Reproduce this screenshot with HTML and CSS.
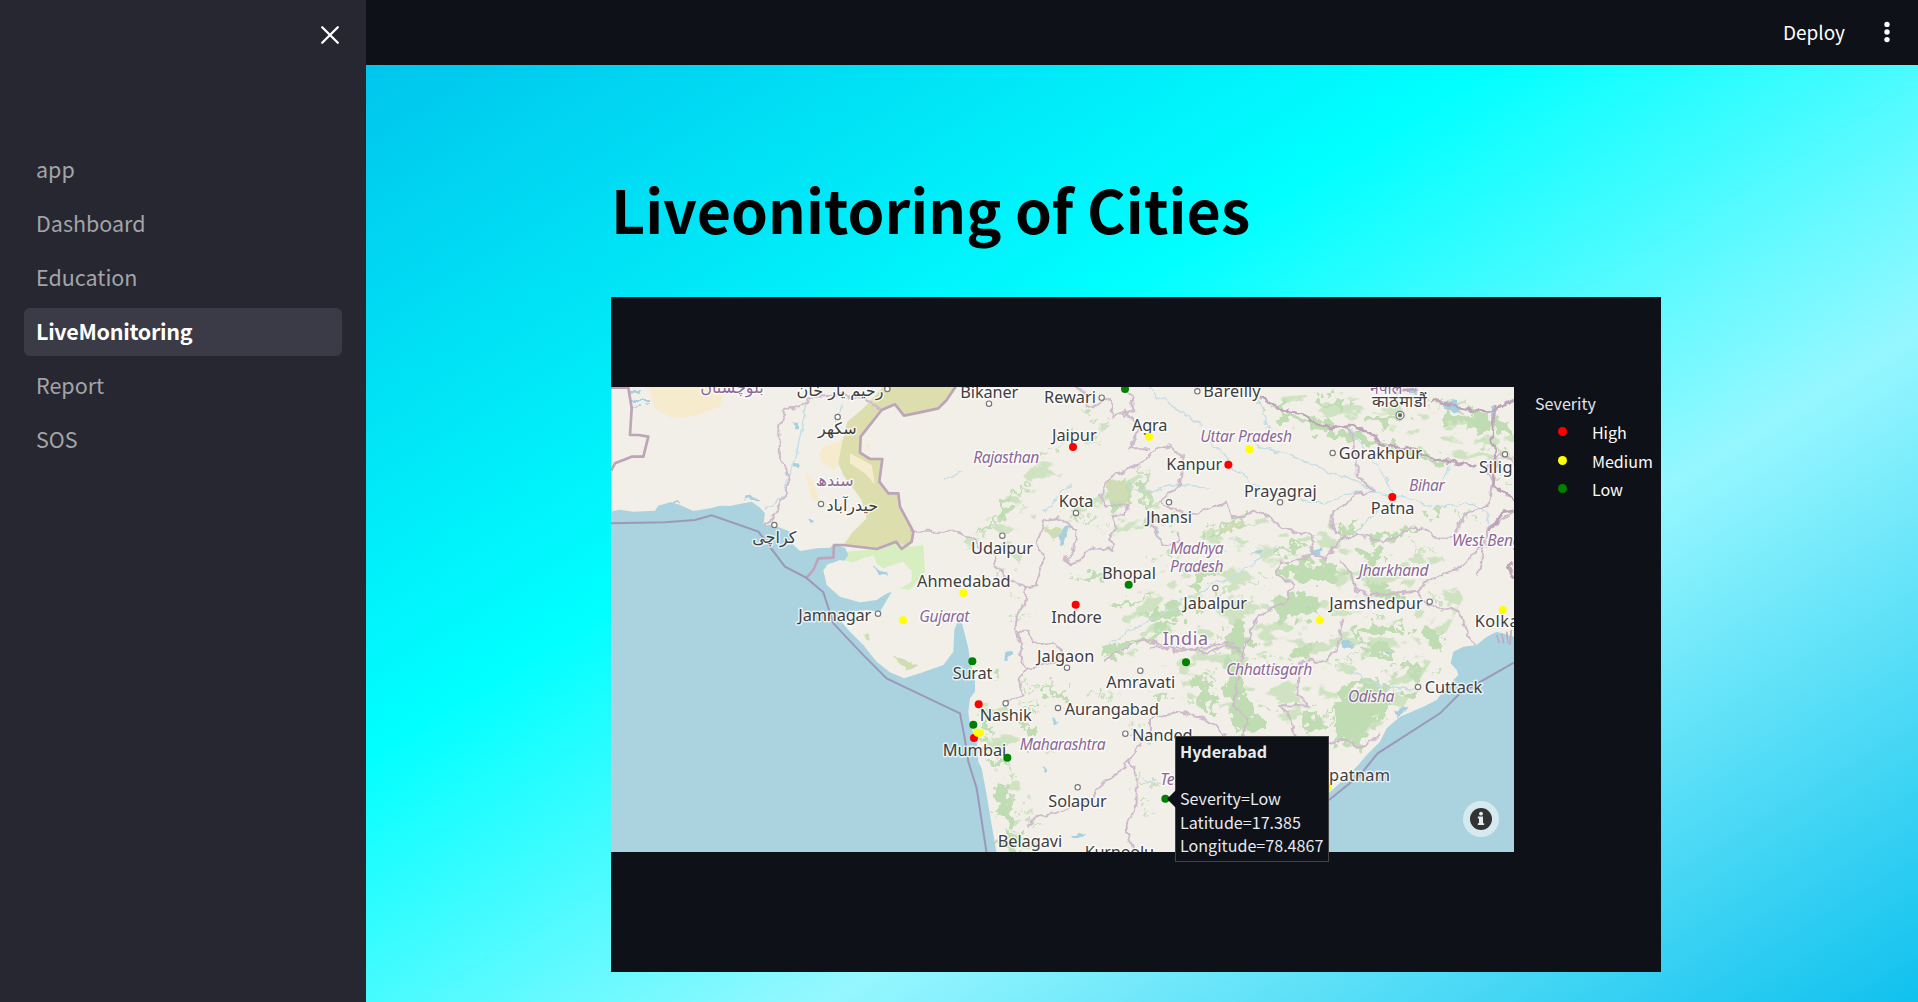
FILE: index.html
```html
<!DOCTYPE html>
<html lang="en">
<head>
<meta charset="utf-8">
<title>LiveMonitoring</title>
<link rel="stylesheet" href="styles.css">
</head>
<body>
<div class="app">
  <aside class="sidebar">
    <button class="close" aria-label="Close sidebar">
      <svg width="20" height="20" viewBox="0 0 20 20"><path d="M2.2 2.2 17.8 17.8M17.8 2.2 2.2 17.8"/></svg>
    </button>
    <nav class="nav">
      <a class="nav-item">app</a>
      <a class="nav-item">Dashboard</a>
      <a class="nav-item">Education</a>
      <a class="nav-item active">LiveMonitoring</a>
      <a class="nav-item">Report</a>
      <a class="nav-item">SOS</a>
    </nav>
  </aside>
  <main class="main">
    <header class="toolbar">
      <span class="deploy">Deploy</span>
      <svg class="kebab" width="6" height="22" viewBox="0 0 6 22"><circle cx="3" cy="3.4" r="2.7"/><circle cx="3" cy="11" r="2.7"/><circle cx="3" cy="18.6" r="2.7"/></svg>
    </header>
    <section class="content">
      <h1 class="title">Liveonitoring of Cities</h1>
      <div class="chart">
        <div class="map">
<svg class="map-svg" width="903" height="465" viewBox="3 6 2709 1395">
  <defs>
    <filter id="rough" x="-5%" y="-5%" width="110%" height="110%"><feTurbulence type="fractalNoise" baseFrequency="0.03" numOctaves="3" seed="4"/><feDisplacementMap in="SourceGraphic" scale="95" xChannelSelector="R" yChannelSelector="G"/></filter>
    <filter id="wiggle" x="-5%" y="-5%" width="110%" height="110%"><feTurbulence type="fractalNoise" baseFrequency="0.035" numOctaves="2" seed="9"/><feDisplacementMap in="SourceGraphic" scale="26" xChannelSelector="R" yChannelSelector="G"/></filter>
    <filter id="scrub" x="0" y="0" width="100%" height="100%"><feTurbulence type="fractalNoise" baseFrequency="0.012 0.02" numOctaves="4" seed="21"/><feColorMatrix values="0 0 0 0 0  0 0 0 0 0  0 0 0 0 0  14 0 0 0 -7.9"/><feComposite in="SourceGraphic" operator="in"/></filter>
  </defs>
  <rect class="land" x="0" y="0" width="2715" height="1405"/>

  <!-- deserts and border zone -->
  <path class="sand" d="M115 6H345L330 65 255 92 185 100 135 70ZM640 185 700 165 690 240 670 255 635 230 628 205ZM585 262 610 285 628 350 605 345Z"/>
  <path class="zone" d="M825 0 H1040 L1010 45 985 70 930 82 882 92 855 58 815 75 752 155 750 203 780 222 817 222 808 290 835 325 865 325 870 365 910 440 905 470 875 492 858 470 800 492 700 480 725 445 770 400 755 345 700 270 685 235 695 180 712 110 760 70Z"/>
  <path class="sand" d="M720 205 785 240 795 300 765 265 720 235ZM770 175 785 178 770 200Z"/>
  <path class="grass" d="M700 500 810 492 855 472 905 485 940 480 945 560 900 615 860 610 905 560 880 530 820 550 770 515 710 540Z"/>

  <!-- scattered vegetation -->
  <path class="scrub" filter="url(#scrub)" d="M1560 640 1800 430 1960 400 2080 450 2200 420 2330 490 2480 480 2560 640 2480 800 2360 1000 2200 1100 2000 1080 1850 960 1760 1000 1700 860 1500 790ZM1960 40 2200 20 2500 60 2712 60V240L2560 225 2350 170 2150 120ZM1100 960 1180 940 1230 1060 1290 1400 1220 1400 1150 1150ZM1060 470 1400 100 1500 120 1300 330 1220 560 1120 560ZM1340 400 1620 250 1660 400 1500 480Z"/>

  <!-- forest cover -->
  <g class="forest" filter="url(#rough)">
    <path d="M1500 300 1550 275 1560 340 1520 365 1490 345ZM1590 290l20-30 10 90 20 70-20-10ZM1310 440l60 5 10 15-50 5ZM1230 300l12-5-60 100-30 20-60 40-5-8 60-40Z"/>
    <path d="M1740 570 1800 545 1830 560 1780 600 1735 610ZM1620 675 1700 660 1770 675 1680 705 1615 705ZM1500 660 1600 635 1610 645 1530 670ZM1500 780 1600 750 1640 720 1690 715 1640 765 1580 775 1470 830ZM1800 440 1900 400 1920 405 1850 440 1800 455Z"/>
    <path d="M1960 50 2060 90 2160 120 2280 160 2420 200 2560 235 2490 240 2380 200 2240 175 2140 140 2020 100ZM2260 90 2400 95 2360 120 2250 115ZM2500 80 2590 85 2700 110 2700 150 2600 130 2500 120ZM2120 30 2220 55 2210 70 2110 45Z"/>
    <path d="M2170 405 2240 425 2220 450 2175 440ZM2280 460 2410 430 2440 435 2370 460 2300 475ZM2460 390 2490 375 2495 395ZM1980 540 2160 530 2230 570 2150 590 2020 575ZM1970 640 2090 620 2140 690 2020 695ZM2250 490 2330 500 2310 530 2240 520ZM2270 590 2360 600 2400 660 2320 650ZM1990 500 2080 465 2100 470 2020 505Z"/>
    <path d="M1830 740 1900 720 1930 750 1890 810 1850 800ZM1850 830 1900 840 1900 930 1970 1030 1900 1060 1850 970ZM1750 870 1800 880 1820 980 1770 960ZM2050 790 2120 780 2100 810 2050 812ZM2200 740 2340 710 2360 740 2260 760ZM2240 780 2330 775 2350 820 2260 800ZM2450 735 2500 725 2490 795 2450 785ZM2210 900 2330 880 2340 960 2300 1000 2250 1090 2190 1070 2180 980 2160 1010 2180 940ZM2390 830 2450 850 2420 880 2370 860ZM2360 920 2420 920 2390 960ZM2100 970 2140 1000 2130 1050 2080 1040ZM2320 720 2400 710 2390 735Z"/>
    <path d="M1110 980 1140 1000 1150 1060 1125 1060ZM1120 1095 1180 1130 1200 1160 1150 1150ZM1150 1180 1190 1190 1210 1260 1220 1330 1190 1330 1160 1250ZM1170 1340 1220 1350 1240 1400 1180 1400ZM1150 850 1180 855 1170 870ZM1280 925 1380 915 1360 930 1290 935ZM1620 930 1680 925 1660 945ZM1230 965 1300 975 1280 985ZM1230 1020 1270 1025 1260 1045ZM1400 580 1500 560 1500 570 1420 590Z"/>
  </g>
  <g class="specks" filter="url(#rough)">
    <path d="M1080 490 1160 410 1240 320 1310 200 1400 140M1420 80 1500 100 1440 180M1370 380 1480 430M1150 560 1220 640M1200 690 1260 700M1530 300 1540 380M1600 250 1620 400M1640 420 1720 390M1620 520 1700 500M1900 600 1980 580M1830 620 1930 650M2200 560 2300 580M2400 480 2470 500M2260 640 2300 700M2450 610 2500 660M1780 790 1850 800M1810 850 1790 930M1940 800 2020 860M2040 830 2160 770M2340 850 2470 860M2160 850 2260 800M1950 960 2060 980M2220 1060 2330 1000M1230 900 1340 915M1430 930 1520 925M1250 1080 1340 1100M1120 1010 1220 1180M1190 1240 1280 1330M1560 1030 1640 1060M1570 1180 1640 1200M1600 1240 1620 1300M1740 940 1780 970M2030 720 2050 740M2420 50 2560 60M2600 180 2690 200M2650 260 2700 300M2540 380 2620 410"/>
  </g>
  <path class="olive" d="M760 745 785 748 775 768ZM850 815 880 822 905 828 922 838 890 855 870 838ZM1290 430 1340 425 1370 445 1330 460ZM1490 290 1550 278 1550 350 1500 348ZM1805 445 1890 405 1905 410 1850 440Z" filter="url(#wiggle)"/>

  <!-- seas -->
  <path class="sea" d="M0 380 30 374 70 380 135 377 145 362 180 352 205 358 250 378 300 370 330 362 360 363 400 355 425 350 450 368 465 385 460 420 490 420 540 440 545 475 570 498 620 490 660 488 672 478 705 488 715 510 690 545 660 535 640 555 650 600 690 635 750 652 800 645 830 625 845 620 825 655 810 680 770 675 720 680 685 700 720 740 760 780 800 830 840 862 882 880 930 865 1000 840 1030 800 1033 735 1050 690 1065 750 1075 790 1080 830 1095 880 1095 920 1080 940 1075 980 1080 1020 1100 1070 1105 1130 1115 1150 1130 1230 1145 1320 1160 1405 0 1405Z"/>
  <path class="sea" d="M2150 1230 2200 1185 2245 1140 2270 1110 2310 1070 2330 1030 2370 995 2440 965 2480 945 2515 900 2545 870 2540 855 2522 835 2530 800 2560 785 2600 780 2630 755 2660 740 2712 755V1405H2150Z"/>
  <path class="isle" d="M650 540 690 525 740 535 790 510 810 560 835 570 870 540 905 555 905 590 870 610 850 615 800 642 750 652 700 630 660 600 643 565Z"/>

  <!-- lakes and rivers -->
  <g class="water" filter="url(#wiggle)">
    <path d="M55 18h35v8H60ZM65 42h55v6H65ZM60 60h30v5H60ZM100 55h25v5h-25ZM550 110h14v20h-10ZM550 235l20 5-5 10-15-5ZM595 405l15 0-8 12ZM180 350h30v8h-30ZM405 340q20-12 45 8l-8 4q-20-14-35-4ZM790 545l40 12 5 12-25-2ZM1345 450l22-30 10 5-20 55h-12ZM2490 50l50 0 10 30-20 5-30-20ZM2640 60l20 0-10 45ZM2400 15h20v10h-20ZM1185 805l18-10 5 10-25 25ZM1325 1000l20 5-10 15ZM1290 1140l25 15-5 10ZM2100 500l30-10 5 12-20 10ZM1915 505l40-8-5 10ZM2085 660l15 0-5 15ZM1380 1355l30-10 20 8-30 10ZM2190 765l40 10-10 15-20-10ZM2325 795l20 10-10 5ZM2350 975l40-10 3 10-35 25ZM1635 420l14 35-8 0Z"/>
  </g>
  <g class="river" filter="url(#wiggle)">
    <path d="M1620 0 1650 40 1720 85 1780 120M1940 30 1960 90 1980 140M1800 170 1850 210 1870 250 1920 290 1990 330 2080 345 2150 360 2220 320 2300 325 2380 335 2450 360 2520 365 2570 350 2620 370 2640 420M1890 150 1960 190 2050 215 2130 250 2220 280 2300 320M2220 130 2270 200 2320 270 2350 330M2230 450 2290 390 2340 350M1500 770 1600 720 1700 660 1800 600 1900 560 2000 480M1560 310 1620 320 1700 300 1800 310M2210 850 2260 880 2320 905 2400 915 2440 900M470 370 520 330 560 200 590 60M680 120 690 60M2490 300 2520 240M1300 380 1380 300M1000 280 1060 260M1600 1180 1650 1200"/>
  </g>

  <!-- regional boundaries -->
  <g class="state" filter="url(#wiggle)">
    <path d="M460 418 490 400 510 350 540 300 535 260 510 225 508 130 525 75 580 60 620 35 700 30 780 50 815 75"/>
    <path d="M900 440 1030 440 1080 455 1110 490 1150 510 1160 550 1210 590 1250 610 1240 660 1210 700 1225 740 1255 740 1270 775 1325 780 1355 800 1340 830 1250 850 1225 880 1240 930 1210 940 1180 960"/>
    <path d="M1250 610 1280 600 1300 520 1280 480 1300 410 1350 400 1400 440 1390 510 1365 520 1380 540 1420 510 1450 490 1510 495 1500 460 1520 430 1505 395 1550 385 1555 355 1490 365 1470 330 1500 280 1600 230 1640 190 1680 180 1700 200 1720 220 1710 300 1650 350 1680 370 1760 390 1800 370 1850 350 1870 400 1950 380 2020 430 2100 450 2110 510 2150 520 2190 460 2165 420 2170 380 2240 325 2295 320 2240 270 2240 230 2230 150 2200 120"/>
    <path d="M1390 0 1430 30 1430 70 1500 45 1510 95 1550 80 1590 130 1560 190 1620 190"/>
    <path d="M1545 0 1565 30 1570 80 1540 90M1700 440 1705 470 1660 480 1640 450 1620 400"/>
    <path d="M2190 460 2260 450 2320 475 2400 430 2450 435 2490 465 2530 455 2560 390 2640 360 2650 290 2630 250 2680 210 2712 240"/>
    <path d="M2110 510 2010 535 2000 570 2050 600 2030 650 1950 690 1920 750 1890 820 1880 900 1870 960 1910 1000 1900 1050 1840 1100M2190 520 2220 560 2240 620 2300 630 2420 620 2450 590 2500 570 2560 540 2620 480 2640 420M2420 620 2450 660 2550 680 2570 730 2590 780M1225 740 1240 850M1620 790 1700 790 1800 800 1850 780 1890 800"/>
    <path d="M1870 770 1700 800 1600 760 1520 800 1480 830M2200 700 2180 790 2150 830 2070 830 2065 930 2100 965 2010 960 2040 1000 2060 1060M2100 1110 2190 1060 2250 1090 2310 1050"/>
    <path d="M1250 1330 1270 1300 1350 1280 1450 1240 1460 1210 1540 1150 1560 1120 1580 1180 1580 1250 1550 1340 1570 1405M1560 1120 1620 1050 1620 1000 1700 980 1780 1000 1850 1050M2600 570 2640 430 2712 380"/>
  </g>
  <g class="country">
    <path d="M0 8H55L65 70 60 150H85L115 155 100 215H65L15 235 3 258"/>
    <path d="M1040 0 1010 45 985 70 930 82 882 92 855 58 815 75 752 155 750 203 780 222 817 222 808 290 835 325 865 325 870 365 910 440 905 470 875 492 858 470 800 492 700 480 672 480 670 518 625 520 610 555 590 578"/>
    <path d="M2320 0 2360 20 2420 15M1950 35 2010 70 2080 90 2110 110 2160 130 2220 120 2290 150 2310 180 2400 190 2460 220 2550 235 2600 245M2470 45 2550 70 2640 80 2712 45M2655 60 2645 160 2660 200 2650 300 2712 350M2712 375 2680 380 2640 440M2712 530 2695 550 2712 580" filter="url(#wiggle)"/>
  </g>
  <path class="maritime" d="M3 415 165 412 255 405 305 391 445 440 525 545 588 578 640 622 670 715 755 805 830 880 930 928 1050 985 1065 1065 1075 1130 1100 1210 1130 1405M2157 1245 2250 1170 2303 1105 2490 985 2550 925 2712 833"/>
  <path class="delta" d="M2660 750l8 25M2675 745l6 30M2690 740l4 35M2704 735l-4 45"/>

  <g class="cities">
    <circle cx="832" cy="12" r="8"/><circle cx="683" cy="96" r="8"/><circle cx="633" cy="357" r="8"/><circle cx="493" cy="420" r="8"/><circle cx="804" cy="686" r="8"/><circle cx="1137" cy="56" r="8"/><circle cx="1475" cy="38" r="8"/><circle cx="1762" cy="19" r="8"/><circle cx="1398" cy="384" r="8"/><circle cx="1177" cy="452" r="8"/><circle cx="1677" cy="352" r="8"/><circle cx="1816" cy="609" r="8"/><circle cx="2168" cy="204" r="8"/><circle cx="2010" cy="352" r="8"/><circle cx="2685" cy="208" r="8"/><circle cx="2459" cy="650" r="8"/><circle cx="1371" cy="848" r="8"/><circle cx="1591" cy="857" r="8"/><circle cx="1187" cy="955" r="8"/><circle cx="1344" cy="969" r="8"/><circle cx="1546" cy="1046" r="8"/><circle cx="1403" cy="1207" r="8"/><circle cx="2424" cy="906" r="8"/><circle cx="2370" cy="91" r="12"/><circle class="capital" cx="2370" cy="91" r="5"/>
  </g>
  <g class="place">
    <text x="1051" y="40" textLength="174">Bikaner</text>
    <text x="1302" y="55" textLength="156">Rewari</text>
    <text x="1780" y="37" textLength="172">Bareilly</text>
    <text x="1566" y="137" textLength="106">Agra</text>
    <text x="1326" y="167" textLength="134">Jaipur</text>
    <text x="1669" y="256" textLength="168">Kanpur</text>
    <text x="2186" y="222" textLength="250">Gorakhpur</text>
    <text x="1902" y="336" textLength="218">Prayagraj</text>
    <text x="2282" y="387" textLength="131">Patna</text>
    <text x="2607" y="264" textLength="168">Siliguri</text>
    <text x="1346" y="366" textLength="104">Kota</text>
    <text x="1608" y="415" textLength="138">Jhansi</text>
    <text x="1083" y="507" textLength="186">Udaipur</text>
    <text x="921" y="606" textLength="281">Ahmedabad</text>
    <text x="1476" y="581" textLength="162">Bhopal</text>
    <text x="1720" y="672" textLength="191">Jabalpur</text>
    <text x="2158" y="672" textLength="280">Jamshedpur</text>
    <text x="565" y="707" textLength="219">Jamnagar</text>
    <text x="1324" y="713" textLength="151">Indore</text>
    <text x="2594" y="725" textLength="180">Kolkata</text>
    <text x="1281" y="831" textLength="172">Jalgaon</text>
    <text x="1028" y="882" textLength="119">Surat</text>
    <text x="1489" y="908" textLength="207">Amravati</text>
    <text x="1364" y="990" textLength="283">Aurangabad</text>
    <text x="1109" y="1009" textLength="156">Nashik</text>
    <text x="1566" y="1067" textLength="182">Nanded</text>
    <text x="998" y="1114" textLength="191">Mumbai</text>
    <text x="1315" y="1267" textLength="175">Solapur</text>
    <text x="1163" y="1386" textLength="194">Belagavi</text>
    <text x="1424" y="1418" textLength="208">Kurnoolu</text>
    <text x="2444" y="924" textLength="173">Cuttack</text>
    <text x="1975" y="1187" textLength="365">Visakhapatnam</text>
    <text x="2286" y="67" textLength="164">काठमाडौं</text>
    <text class="ar" x="690" y="32" text-anchor="middle">رحیم یار خان</text>
    <text class="ar" x="682" y="148" text-anchor="middle">سکھر</text>
    <text class="ar" x="727" y="378" text-anchor="middle">حیدرآباد</text>
    <text class="ar" x="493" y="474" text-anchor="middle">کراچی</text>
  </g>
  <g class="region">
    <text x="1090" y="235" textLength="198">Rajasthan</text>
    <text x="1771" y="172" textLength="275">Uttar Pradesh</text>
    <text x="2397" y="317" textLength="107">Bihar</text>
    <text x="1680" y="507" textLength="161">Madhya</text>
    <text x="1680" y="560" textLength="161">Pradesh</text>
    <text x="2246" y="574" textLength="210">Jharkhand</text>
    <text x="2526" y="484" textLength="246">West Bengal</text>
    <text x="928" y="710" textLength="150">Gujarat</text>
    <text x="1849" y="869" textLength="258">Chhattisgarh</text>
    <text x="2214" y="950" textLength="139">Odisha</text>
    <text x="1229" y="1096" textLength="258">Maharashtra</text>
    <text x="1651" y="1200" textLength="210">Telangana</text>
    <text class="country-name" x="1658" y="780" textLength="136">India</text>
    <text class="upright" x="2280" y="26">नेपाल</text>
    <text class="ar upright" x="366" y="24" text-anchor="middle">بلوچستان</text>
    <text class="ar upright" x="674" y="302" text-anchor="middle">سندھ</text>
  </g>

  <g class="markers">
    <g class="high"><circle cx="1389" cy="186" r="12"/><circle cx="1855" cy="239" r="12"/><circle cx="2347" cy="336" r="12"/><circle cx="1397" cy="659" r="12"/><circle cx="1106" cy="958" r="12"/><circle cx="1092" cy="1059" r="12"/></g>
    <g class="medium"><circle cx="1617" cy="155" r="12"/><circle cx="1918" cy="193" r="12"/><circle cx="1060" cy="624" r="12"/><circle cx="879" cy="706" r="12"/><circle cx="2130" cy="706" r="12"/><circle cx="2678" cy="675" r="12"/><circle cx="1103" cy="1043" r="12"/><circle cx="1110" cy="1043" r="12"/><circle cx="2152" cy="1208" r="12"/></g>
    <g class="low"><circle cx="1545" cy="12" r="12"/><circle cx="1556" cy="599" r="12"/><circle cx="1087" cy="829" r="12"/><circle cx="1728" cy="832" r="12"/><circle cx="1090" cy="1019" r="12"/><circle cx="1192" cy="1118" r="12"/><circle cx="1666" cy="1241" r="12"/></g>
  </g>
</svg>
          <svg class="info" width="36" height="36" viewBox="0 0 36 36"><circle class="info-bg" cx="18" cy="18" r="18"/><circle class="info-disc" cx="18" cy="18" r="11"/><path class="info-i" d="M18 12.6v.1"/><path class="info-stem" d="M16 15.6h4v6.6h1.2v1.8h-6.4v-1.8H16v-4.8h-1.2v-1.8Z"/></svg>
          <div class="tooltip"><b>Hyderabad</b><br><br>Severity=Low<br>Latitude=17.385<br>Longitude=78.4867</div>
        </div>
        <div class="legend">
          <div class="legend-title">Severity</div>
          <div class="legend-item"><i class="dot dot-high"></i>High</div>
          <div class="legend-item"><i class="dot dot-medium"></i>Medium</div>
          <div class="legend-item"><i class="dot dot-low"></i>Low</div>
        </div>
      </div>
    </section>
  </main>
</div>
</body>
</html>
```
FILE: styles.css
```css
* { box-sizing: border-box; }
body {
  margin: 0;
  font-family: "Noto Sans CJK JP", "Noto Sans", sans-serif;
  background: #0e1117;
  overflow: hidden;
}
.app { display: flex; height: 1002px; }

.sidebar {
  width: 366px;
  flex: none;
  background: #262730;
  display: flex;
  flex-direction: column;
}
.close {
  align-self: flex-end;
  margin: 25px 26px 0 0;
  padding: 0;
  width: 20px;
  height: 20px;
  border: 0;
  background: none;
}
.close svg { display: block; fill: none; stroke: #fff; stroke-width: 2.3; stroke-linecap: round; }
.nav { margin-top: 101px; padding: 0 24px; display: flex; flex-direction: column; gap: 6px; }
.nav-item {
  height: 48px;
  padding: 0 12px;
  line-height: 45px;
  font-size: 21.5px;
  color: #a3a4a8;
  border-radius: 6px;
}
.nav-item.active { background: #3b3b47; color: #fff; font-weight: 700; letter-spacing: -.3px; }

.main {
  flex: 1;
  background: linear-gradient(148.5deg, #00c0eb 0%, #00ffff 38.5%, #96f7ff 65.7%, #10c1ee 100%);
}
.toolbar {
  height: 65px;
  background: #0e1117;
  display: flex;
  justify-content: flex-end;
  align-items: center;
  gap: 39px;
  padding: 0 28px 2px 0;
  color: #fff;
}
.deploy { font-size: 19px; line-height: 24px; }
.kebab { fill: #fff; }
.content { width: 1050px; margin-left: 245px; }
.title {
  margin: 0;
  padding-top: 98px;
  height: 232px;
  line-height: 90px;
  font-size: 59.1px;
  font-weight: 700;
  color: #000;
  white-space: nowrap;
}
.chart {
  height: 675px;
  padding-top: 90px;
  background: #0e1117;
  display: flex;
}

.map { position: relative; width: 903px; height: 465px; }
.map-svg { display: block; }
.land, .isle { fill: #f2efe9; }
.sea { fill: #aad3df; }
.water { fill: #a6d0e0; }
.river path { fill: none; stroke: #c3dde4; stroke-width: 4; }
.sand { fill: #f7ebce; }
.zone { fill: #dcdfad; }
.grass { fill: #d7efc0; }
.olive { fill: #d0dcb4; }
.forest { fill: #c0dcb2; }
.scrub { fill: #cfe3c2; }
.specks { fill: none; stroke: #cbe0bf; stroke-width: 11; stroke-dasharray: 16 13; }
.state path { fill: none; stroke: #cdbacb; stroke-width: 6; }
.country path { fill: none; stroke: #bda4b8; stroke-width: 8; stroke-linejoin: round; }
.maritime { fill: none; stroke: #9d98b8; stroke-width: 6; }
.delta { fill: none; stroke: #bdabc0; stroke-width: 5; }
.cities circle { fill: #fff; stroke: #777; stroke-width: 3.5; }
.cities .capital { fill: #555; }
.place text, .region text {
  font-family: "Noto Sans", "DejaVu Sans", sans-serif;
  font-size: 49px;
  paint-order: stroke;
  stroke: rgba(255, 255, 255, .7);
  stroke-width: 9;
  stroke-linejoin: round;
}
.place text { fill: #3f3f3f; }
.region text { fill: #8d6896; font-style: italic; font-size: 47px; }
.region .country-name { font-style: normal; font-size: 54px; }
.region .upright { font-style: normal; }
.place .ar, .region .ar { font-family: "DejaVu Sans", sans-serif; font-size: 48px; }
.high, .dot-high { fill: #f00; background: #f00; }
.medium, .dot-medium { fill: #ff0; background: #ff0; }
.low, .dot-low { fill: green; background: green; }

.info { position: absolute; right: 15px; bottom: 15px; }
.info-bg { fill: #fff; opacity: .5; }
.info-disc { fill: #333; }
.info-i { stroke: #e2edf0; stroke-width: 3.8; stroke-linecap: round; }
.info-stem { fill: #e2edf0; }
.tooltip {
  position: absolute;
  left: 564px;
  top: 349px;
  width: 154px;
  height: 126px;
  padding: 3px 4px;
  border: 1px solid #444;
  background: #0e1117;
  color: #e6eaf1;
  font-size: 16.1px;
  line-height: 23.5px;
  white-space: nowrap;
}
.tooltip::before {
  content: "";
  position: absolute;
  left: -9px;
  top: 53px;
  border: solid transparent;
  border-width: 9px 9px 9px 0;
  border-right-color: #0e1117;
}

.legend { padding: 2px 0 0 21px; color: #fafafa; font-size: 16.1px; }
.legend-title { height: 29px; line-height: 28px; color: #e0e4ec; }
.legend-item { display: flex; align-items: center; height: 28.5px; line-height: 28px; padding-left: 22.5px; }
.dot { width: 9.4px; height: 9.4px; border-radius: 50%; margin: 0 25px 1px 0; }
```
